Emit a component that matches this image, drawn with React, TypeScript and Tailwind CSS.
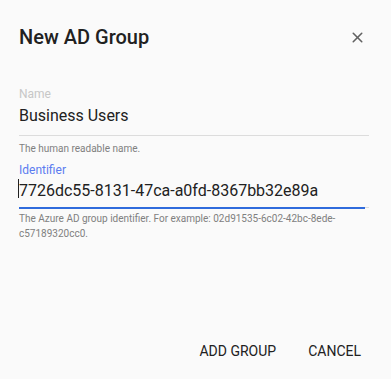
import { X } from "lucide-react";

export default function App() {
  return (
    <div className="flex h-[379px] w-[391px] flex-col bg-[#fafafa] font-['Roboto',sans-serif]">
      <div className="flex items-center justify-between pl-[19px] pr-[25px] pt-[25px]">
        <h1 className="text-[20px] leading-[24px] font-medium text-[#212121]">New AD Group</h1>
        <button className="text-[#616161]">
          <X size={17} strokeWidth={2.2} />
        </button>
      </div>

      <div className="mt-[38px] px-[19px] pr-[22px]">
        <label className="block text-[12px] leading-[14px] text-[#c7c7c7]">Name</label>
        <div className="border-b border-[#dcdcdc] pb-[9px] pt-[5px] text-[16px] leading-[20px] text-[#212121]">
          Business Users
        </div>
        <div className="mt-[6px] text-[10px] leading-[13px] text-[#808080]">The human readable name.</div>
      </div>

      <div className="mt-[8px] px-[19px] pr-[22px]">
        <label className="block text-[12px] leading-[14px] text-[#5b7cf0]">Identifier</label>
        <div className="relative pb-[7px] pt-[4px]">
          <div className="relative text-[16px] leading-[20px] text-[#212121]">
            <span className="absolute -left-[1px] top-[-2px] h-[19px] w-[1px] bg-[#212121]" />
            7726dc55-8131-47ca-a0fd-8367bb32e89a
          </div>
          <div className="absolute bottom-0 left-0 right-0 h-px bg-[#dcdcdc]" />
          <div className="absolute -bottom-px left-0 right-[4px] h-[2px] bg-[#2f6bdc]" />
        </div>
        <div className="mt-[3px] text-[10px] leading-[15px] text-[#808080]">
          The Azure AD group identifier. For example: 02d91535-6c02-42bc-8ede-c57189320cc0.
        </div>
      </div>

      <div className="mt-auto flex justify-end gap-[32px] pb-[20px] pr-[30px]">
        <button className="text-[14px] leading-[16px] text-[#212121]">ADD GROUP</button>
        <button className="text-[14px] leading-[16px] text-[#212121]">CANCEL</button>
      </div>
    </div>
  );
}
